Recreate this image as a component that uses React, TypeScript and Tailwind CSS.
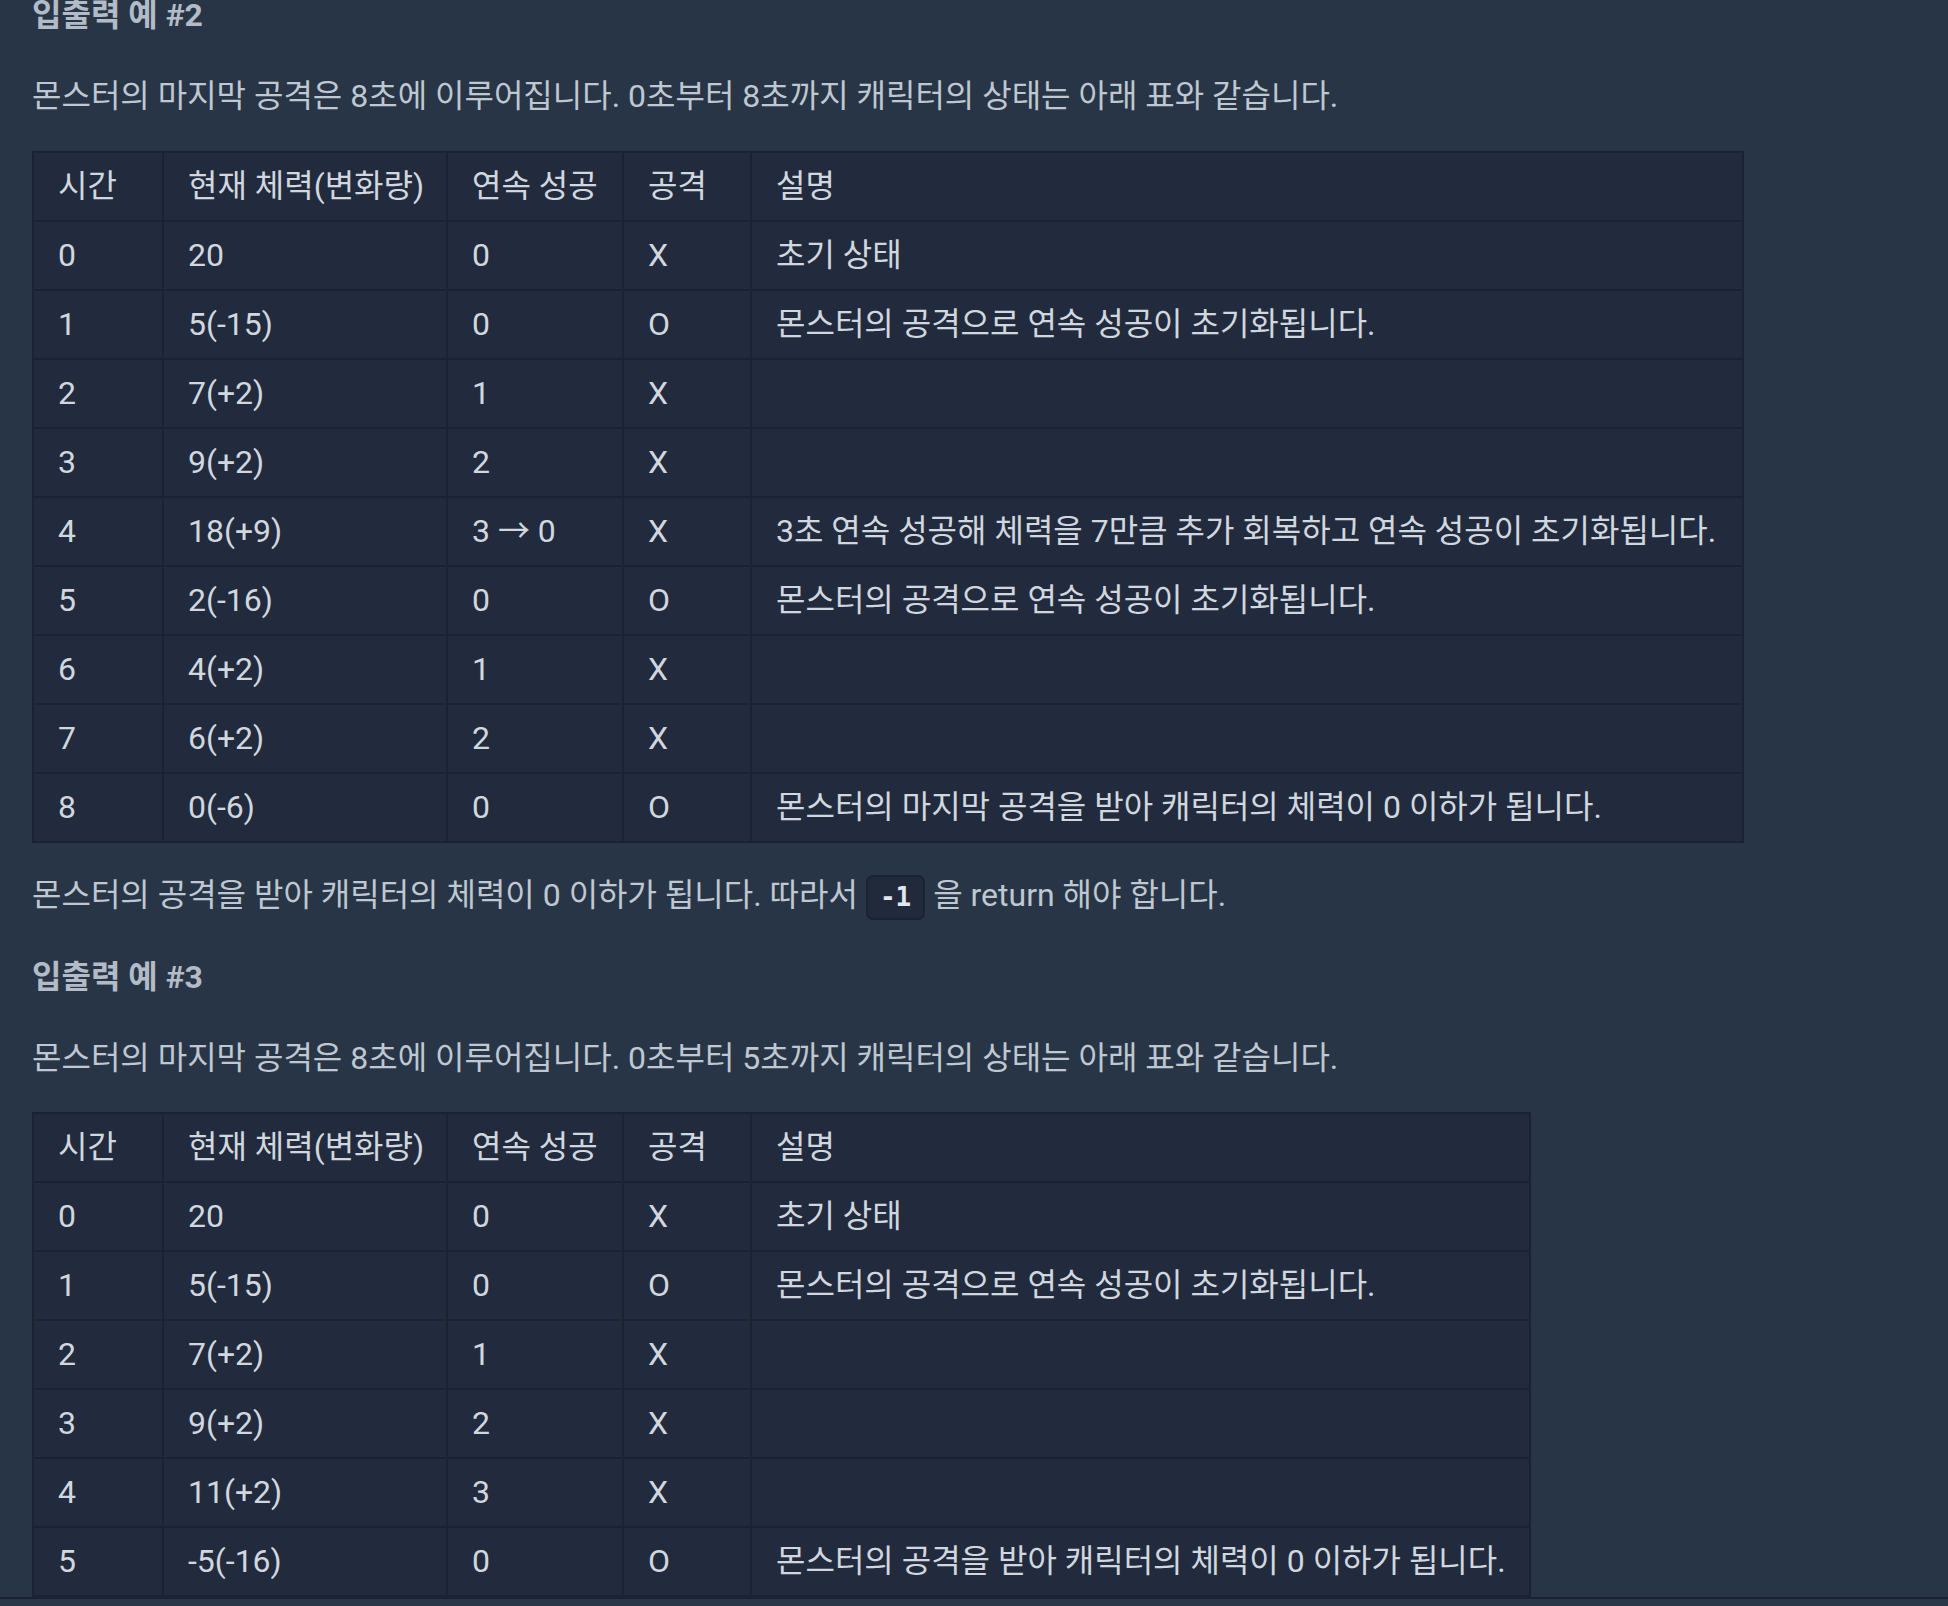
import React from "react";

type Row = [string, string, string, string, string];

const headers: Row = ["시간", "현재 체력(변화량)", "연속 성공", "공격", "설명"];

const table1: Row[] = [
  ["0", "20", "0", "X", "초기 상태"],
  ["1", "5(-15)", "0", "O", "몬스터의 공격으로 연속 성공이 초기화됩니다."],
  ["2", "7(+2)", "1", "X", ""],
  ["3", "9(+2)", "2", "X", ""],
  ["4", "18(+9)", "3 → 0", "X", "3초 연속 성공해 체력을 7만큼 추가 회복하고 연속 성공이 초기화됩니다."],
  ["5", "2(-16)", "0", "O", "몬스터의 공격으로 연속 성공이 초기화됩니다."],
  ["6", "4(+2)", "1", "X", ""],
  ["7", "6(+2)", "2", "X", ""],
  ["8", "0(-6)", "0", "O", "몬스터의 마지막 공격을 받아 캐릭터의 체력이 0 이하가 됩니다."],
];

const table2: Row[] = [
  ["0", "20", "0", "X", "초기 상태"],
  ["1", "5(-15)", "0", "O", "몬스터의 공격으로 연속 성공이 초기화됩니다."],
  ["2", "7(+2)", "1", "X", ""],
  ["3", "9(+2)", "2", "X", ""],
  ["4", "11(+2)", "3", "X", ""],
  ["5", "-5(-16)", "0", "O", "몬스터의 공격을 받아 캐릭터의 체력이 0 이하가 됩니다."],
];

function Cell({ children }: { children: React.ReactNode }) {
  return (
    <td className="border-2 border-[#1b2332] px-[24px] py-[13px] leading-[41px] whitespace-nowrap align-middle">
      {children}
    </td>
  );
}

function DataTable({ rows, wide }: { rows: Row[]; wide: boolean }) {
  return (
    <table
      className={`border-collapse table-fixed bg-[#222b3d] text-[#d1d7df] ${wide ? "w-[1712px]" : "w-[1499px]"}`}
    >
      <colgroup>
        <col className="w-[130px]" />
        <col className="w-[284px]" />
        <col className="w-[176px]" />
        <col className="w-[128px]" />
        <col />
      </colgroup>
      <thead>
        <tr>
          {headers.map((h, i) => (
            <Cell key={i}>{h}</Cell>
          ))}
        </tr>
      </thead>
      <tbody>
        {rows.map((r, i) => (
          <tr key={i}>
            {r.map((c, j) => (
              <Cell key={j}>{c}</Cell>
            ))}
          </tr>
        ))}
      </tbody>
    </table>
  );
}

export default function App() {
  return (
    <div
      className="min-h-[1606px] w-[1948px] overflow-hidden bg-[#283546] text-[32px] text-[#bfc7d1]"
      style={{ fontFamily: 'Roboto, "Noto Sans CJK KR", sans-serif' }}
    >
      <div className="pl-[32px]">
        <h3 className="font-bold text-[#b2bbc6] leading-[30px]">입출력 예 #2</h3>
        <p className="mt-[45px] leading-[42px]">
          몬스터의 마지막 공격은 8초에 이루어집니다. 0초부터 8초까지 캐릭터의 상태는 아래 표와 같습니다.
        </p>
        <div className="mt-[34px]">
          <DataTable rows={table1} wide />
        </div>
        <p className="mt-[31px] leading-[42px]">
          몬스터의 공격을 받아 캐릭터의 체력이 0 이하가 됩니다. 따라서{" "}
          <code
            className="inline-block rounded-[7px] border-2 border-[#1b2332] bg-[#212a3b] px-[12px] leading-[41px] text-[26px] font-bold text-[#e2e7ee] align-middle"
            style={{ fontFamily: '"DejaVu Sans Mono", "Liberation Mono", monospace' }}
          >
            -1
          </code>{" "}
          을 return 해야 합니다.
        </p>
        <h3 className="mt-[42px] font-bold text-[#b2bbc6] leading-[30px]">입출력 예 #3</h3>
        <p className="mt-[45px] leading-[42px]">
          몬스터의 마지막 공격은 8초에 이루어집니다. 0초부터 5초까지 캐릭터의 상태는 아래 표와 같습니다.
        </p>
        <div className="mt-[33px]">
          <DataTable rows={table2} wide={false} />
        </div>
      </div>
      <div className="h-[30px] border-t-2 border-[#1b2332] bg-[#2a3748]" />
    </div>
  );
}
